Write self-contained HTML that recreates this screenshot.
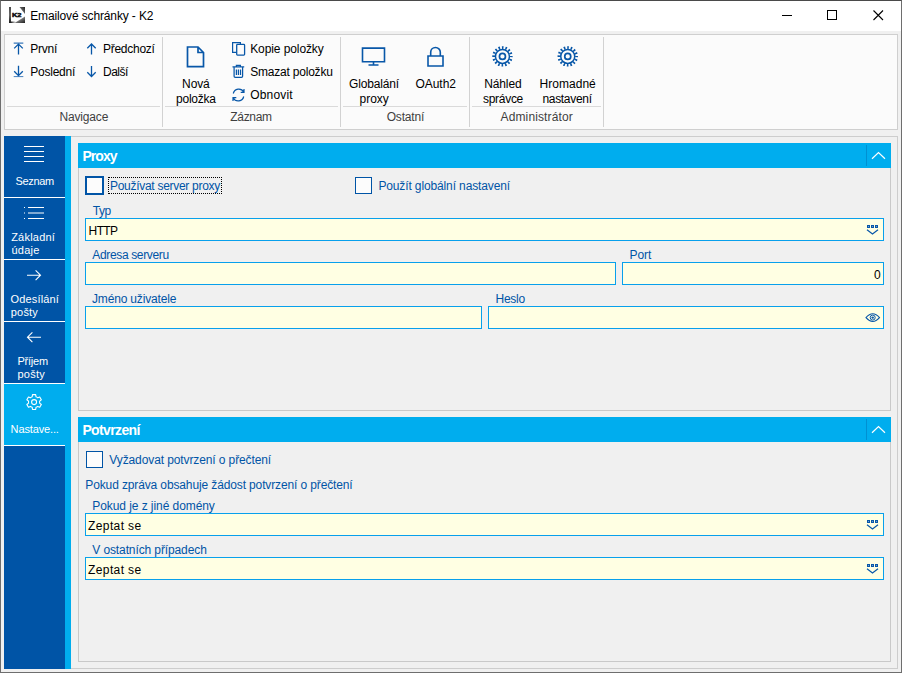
<!DOCTYPE html>
<html lang="cs">
<head>
<meta charset="utf-8">
<title>Emailové schránky - K2</title>
<style>
*{box-sizing:border-box;margin:0;padding:0}
html,body{width:902px;height:673px;overflow:hidden;background:#f0f0f0}
body{font-family:"Liberation Sans",sans-serif;font-size:12px;color:#000;position:relative}
div,svg{position:absolute}
.t{white-space:nowrap;line-height:16px;z-index:3}
#win{left:0;top:0;width:902px;height:673px;border:1px solid #6e6e6e;border-top-color:#4a4a4a;background:#f0f0f0}
#title{left:1px;top:1px;width:900px;height:30px;background:#fff}
#ribbon{left:4px;top:34px;width:894px;height:96px;background:#fbfbfb;border:1px solid #cfcfcf}
.vsep{width:1px;background:#d2d2d2;top:37px;height:90px}
.hsep{height:1px;background:#dadada;top:106px}
#side{left:4px;top:136px;width:61px;height:533px;background:#0054a6}
#strip{left:65px;top:136px;width:6px;height:533px;background:#00adee}
#sel{left:4px;top:384px;width:61px;height:61px;background:#00adee}
.sl{left:4px;width:61px;height:1px;background:#fff}
#content{left:71px;top:136px;width:827px;height:533px;border:1px solid #cdcdcd;border-left:none;background:#f0f0f0}
.ph{left:78px;width:813px;height:25px;background:#00adee}
.pb{left:78px;width:813px;border:1px solid #c9c9c9;border-top:none;background:#f0f0f0}
.phs{width:1px;height:21px;background:#0090d2;left:866px}
.inp{z-index:2;height:23px;background:#ffffe3;border:1px solid #08a0ec}
.cb{width:17px;height:17px;background:#fcfcfc;border:1px solid #0054a6}
svg{overflow:visible}
.i{stroke:#0857a8;fill:none;stroke-width:1.3}
.w{stroke:#fff;fill:none;stroke-width:1.2}
</style>
</head>
<body>
<div id="win"></div>
<div id="title"></div>
<!-- title bar icon + window controls -->
<svg style="left:9px;top:7px" width="16" height="16" viewBox="0 0 16 16">
 <defs>
  <linearGradient id="g1" x1="0.2" y1="0.2" x2="1" y2="1"><stop offset="0" stop-color="#cfcfcf"/><stop offset="0.5" stop-color="#666"/><stop offset="1" stop-color="#1c1c1c"/></linearGradient>
  <linearGradient id="g2" x1="0" y1="0" x2="0" y2="1"><stop offset="0" stop-color="#4a4a4a"/><stop offset="0.5" stop-color="#6a6a6a"/><stop offset="1" stop-color="#1a1a1a"/></linearGradient>
  <linearGradient id="g3" x1="0" y1="1" x2="1" y2="0"><stop offset="0" stop-color="#bbb"/><stop offset="0.6" stop-color="#555"/><stop offset="1" stop-color="#222"/></linearGradient>
  <linearGradient id="g4" x1="0" y1="0" x2="1" y2="0"><stop offset="0" stop-color="#222"/><stop offset="1" stop-color="#ddd"/></linearGradient>
 </defs>
 <rect x="0" y="0" width="2" height="16" fill="url(#g2)"/>
 <rect x="2" y="14.500" width="4.500" height="1.500" fill="url(#g4)"/>
 <path d="M10.500 0H16V7Z" fill="url(#g3)"/>
 <path d="M16 9.500V16H5.500Z" fill="url(#g1)"/>
 <text x="2.900" y="10.100" font-family="Liberation Sans, sans-serif" font-size="5.800" font-weight="700" fill="#0c0c0c" stroke="#0c0c0c" stroke-width="0.450" textLength="9.600" lengthAdjust="spacingAndGlyphs">K2</text>
</svg>
<svg style="left:770px;top:0" width="132" height="31" viewBox="0 0 132 31">
 <path d="M12 15.5H22" stroke="#000" stroke-width="1" fill="none"/>
 <rect x="57.5" y="10.5" width="9" height="9" stroke="#000" stroke-width="1" fill="none"/>
 <path d="M103.5 10.5L113 20M113 10.5L103.5 20" stroke="#000" stroke-width="1.1" fill="none"/>
</svg>

<!-- ribbon -->
<div id="ribbon"></div>
<div class="vsep" style="left:162px"></div>
<div class="vsep" style="left:340px"></div>
<div class="vsep" style="left:469px"></div>
<div class="vsep" style="left:603px"></div>
<div class="hsep" style="left:7px;width:153px"></div>
<div class="hsep" style="left:165px;width:173px"></div>
<div class="hsep" style="left:343px;width:124px"></div>
<div class="hsep" style="left:472px;width:129px"></div>

<!-- ribbon icons -->
<svg style="left:0;top:0" width="902" height="135" viewBox="0 0 902 135">
 <g class="i">
  <!-- Prvni -->
  <path d="M13.7 43.1H23.3" stroke-width="1"/><path d="M18.5 54.5V43.8M14.2 48.4L18.5 44.1L22.8 48.4"/>
  <!-- Posledni -->
  <path d="M13.7 76.6H23.3" stroke-width="1" stroke-opacity=".75"/><path d="M18.5 65.7V75.6M14.2 71.3L18.5 75.6L22.8 71.3"/>
  <!-- Predchozi -->
  <path d="M91.5 54.5V44M87.3 48.2L91.5 44L95.7 48.2"/>
  <!-- Dalsi -->
  <path d="M91.5 66V76.5M87.3 72.3L91.5 76.5L95.7 72.3"/>
  <!-- Nova polozka -->
  <path d="M187.500 47.000H198.000L203.500 52.500V66.600H187.500ZM198.000 47.000V52.500H203.500" stroke-width="1.7"/>
  <!-- Kopie -->
  <path d="M240.400 44.200V42.600H232.600V52.400H236.600" stroke-width="1.2"/>
  <rect x="236.700" y="44.400" width="7.900" height="10.700" rx="0.800" stroke-width="1.3"/>
  <!-- Smazat -->
  <path d="M232.500 66.800H244.200M236.400 66.600V65.400H240.400V66.600M234.100 67.000V76.200Q234.100 77.300 235.200 77.300H241.500Q242.600 77.300 242.600 76.200V67.000M236.400 69.500V75.000M238.400 69.500V75.000M240.500 69.500V75.000" stroke-width="1.250"/>
  <!-- Obnovit -->
  <path d="M233.300 93.500A5.600 5.600 0 0 1 243.700 92.000M244.000 89.000V92.300H240.700M243.700 96.500A5.600 5.600 0 0 1 233.300 98.000M233.000 101.000V97.700H236.300" stroke-width="1.2"/>
  <!-- Monitor -->
  <path d="M362.500 48.100H384.500V61.800H362.500ZM373.500 61.800V65M368.500 65H378.500" stroke-width="1.6"/>
  <!-- gears -->
  <g id="gr" stroke-width="1.5">
   <circle cx="502.450" cy="56.400" r="7.000" stroke-width="1.5"/>
   <circle cx="502.450" cy="56.400" r="3.000" stroke-width="1.7"/>
   <circle cx="502.450" cy="56.400" r="8.800" stroke-width="2.800" stroke-dasharray="1.600 1.856" stroke-dashoffset="0.800"/>
  </g>
  <use href="#gr" x="65.300"/>
  <!-- Lock -->
  <path d="M428 56H443V66H428ZM430.700 56V52.300A4.800 4.800 0 0 1 440.300 52.300V56" stroke-width="1.6"/>
 </g>
</svg>

<!-- sidebar -->
<div id="content"></div>
<div id="side"></div>
<div id="strip"></div>
<div id="sel"></div>
<div class="sl" style="top:197px"></div>
<div class="sl" style="top:259px"></div>
<div class="sl" style="top:321px"></div>
<div class="sl" style="top:383px"></div>
<div class="sl" style="top:445px"></div>
<svg style="left:0;top:136px" width="71" height="320" viewBox="0 136 71 320">
 <g class="w">
  <path d="M24 146.500H44M24 151.500H44M24 156.500H44M24 161.500H44" stroke-width="1"/>
  <path d="M28 207.500H44M28 213H44M28 218.500H44M24 207.500H25M24 213H25M24 218.500H25" stroke-width="1"/>
  <path d="M27 275.200H40.500M35.600 270.300L40.500 275.200L35.600 280.100" stroke-width="1.1"/>
  <path d="M41 337.200H27.500M32.400 332.300L27.500 337.200L32.400 342.100" stroke-width="1.1"/>
  <path d="M36.02 396.84L35.68 394.67L32.52 394.67L32.18 396.84A5.6 5.6 0 0 0 30.50 397.81L28.45 397.01L26.87 399.75L28.59 401.13A5.6 5.6 0 0 0 28.59 403.07L26.87 404.45L28.45 407.19L30.50 406.39A5.6 5.6 0 0 0 32.18 407.36L32.52 409.53L35.68 409.53L36.02 407.36A5.6 5.6 0 0 0 37.70 406.39L39.75 407.19L41.33 404.45L39.61 403.07A5.6 5.6 0 0 0 39.61 401.13L41.33 399.75L39.75 397.01L37.70 397.81A5.6 5.6 0 0 0 36.02 396.84Z" stroke-width="1.1" stroke-linejoin="round"/>
  <circle cx="34.1" cy="402.1" r="2.5" stroke-width="1.1"/>
 </g>
</svg>

<!-- panels -->
<div class="ph" style="top:143px"></div>
<div class="pb" style="top:168px;height:243px"></div>
<div class="ph" style="top:417px"></div>
<div class="pb" style="top:442px;height:220px"></div>
<div class="phs" style="top:145px"></div>
<div class="phs" style="top:419px"></div>
<svg style="left:866px;top:143px" width="25" height="300" viewBox="866 143 25 300">
 <path class="w" d="M872 158.700L878.500 152.500L885 158.700M872 432.700L878.500 426.500L885 432.700" stroke-width="1.3"/>
</svg>

<!-- checkboxes -->
<div class="cb" style="left:85px;top:176px;width:19px;height:19px;border:2px solid #0054a6"></div>
<div style="left:108px;top:177px;width:114px;height:17px;border:1px dotted #000"></div>
<div class="cb" style="left:355px;top:177px"></div>
<div class="cb" style="left:86px;top:451px"></div>

<!-- inputs -->
<div class="inp" style="left:85px;top:218px;width:799px"></div>
<div class="inp" style="left:85px;top:262px;width:531px"></div>
<div class="inp" style="left:622px;top:262px;width:262px"></div>
<div class="inp" style="left:85px;top:306px;width:397px"></div>
<div class="inp" style="left:488px;top:306px;width:396px"></div>
<div class="inp" style="left:85px;top:513px;width:799px"></div>
<div class="inp" style="left:85px;top:557px;width:799px"></div>

<!-- dropdown glyphs + eye -->
<svg style="left:860px;top:218px;z-index:3" width="24" height="365" viewBox="860 218 24 365">
 <g id="dd" fill="#0857a8">
  <rect x="867" y="225" width="3" height="3"/><rect x="871" y="225" width="3" height="3"/><rect x="875" y="225" width="3" height="3"/>
  <rect x="868" y="226" width="1" height="1" fill="#6b9fd6"/><rect x="872" y="226" width="1" height="1" fill="#6b9fd6"/><rect x="876" y="226" width="1" height="1" fill="#6b9fd6"/>
  <path d="M867 229.700L872.500 234L878 229.700" fill="none" stroke="#0857a8" stroke-width="1.2"/>
 </g>
 <use href="#dd" y="295"/>
 <use href="#dd" y="339"/>
 <g fill="none" stroke="#0857a8" stroke-width="1.1">
  <path d="M866 317.600Q872.700 309.800 879.500 317.600Q872.700 325.400 866 317.600Z"/>
  <circle cx="872.700" cy="317.600" r="2.500" stroke-width="1"/>
  <circle cx="872.700" cy="317.600" r="1.200" fill="#0857a8" stroke="none"/>
 </g>
</svg>

<div class="t" style="left:30.2px;top:8px;font-size:12px;letter-spacing:-0.134px;color:#000">Emailové schránky - K2</div>
<div class="t" style="left:30.3px;top:41px;font-size:12px;letter-spacing:-0.263px;color:#000">První</div>
<div class="t" style="left:30.3px;top:64px;font-size:12px;letter-spacing:-0.250px;color:#000">Poslední</div>
<div class="t" style="left:103.0px;top:41px;font-size:12px;letter-spacing:-0.270px;color:#000">Předchozí</div>
<div class="t" style="left:103.0px;top:64px;font-size:12px;letter-spacing:-0.509px;color:#000">Další</div>
<div class="t" style="left:59.5px;top:109px;font-size:12px;letter-spacing:-0.166px;color:#3f3f3f">Navigace</div>
<div class="t" style="left:182.1px;top:76px;font-size:12px;letter-spacing:-0.129px;color:#000">Nová</div>
<div class="t" style="left:176.0px;top:91px;font-size:12px;letter-spacing:-0.225px;color:#000">položka</div>
<div class="t" style="left:250.2px;top:41px;font-size:12px;letter-spacing:-0.094px;color:#000">Kopie položky</div>
<div class="t" style="left:250.2px;top:64px;font-size:12px;letter-spacing:-0.206px;color:#000">Smazat položku</div>
<div class="t" style="left:250.2px;top:87px;font-size:12px;letter-spacing:0.192px;color:#000">Obnovit</div>
<div class="t" style="left:230.3px;top:109px;font-size:12px;letter-spacing:-0.310px;color:#3f3f3f">Záznam</div>
<div class="t" style="left:349.0px;top:76px;font-size:12px;letter-spacing:-0.153px;color:#000">Globalání</div>
<div class="t" style="left:359.6px;top:91px;font-size:12px;letter-spacing:-0.049px;color:#000">proxy</div>
<div class="t" style="left:415.4px;top:76px;font-size:12px;letter-spacing:-0.017px;color:#000">OAuth2</div>
<div class="t" style="left:386.7px;top:109px;font-size:12px;letter-spacing:-0.170px;color:#3f3f3f">Ostatní</div>
<div class="t" style="left:484.2px;top:76px;font-size:12px;letter-spacing:-0.122px;color:#000">Náhled</div>
<div class="t" style="left:483.0px;top:91px;font-size:12px;letter-spacing:-0.290px;color:#000">správce</div>
<div class="t" style="left:539.6px;top:76px;font-size:12px;letter-spacing:0.021px;color:#000">Hromadné</div>
<div class="t" style="left:542.4px;top:91px;font-size:12px;letter-spacing:-0.305px;color:#000">nastavení</div>
<div class="t" style="left:500.6px;top:109px;font-size:12px;letter-spacing:0.116px;color:#3f3f3f">Administrátor</div>
<div class="t" style="left:15.6px;top:173px;font-size:11px;letter-spacing:-0.343px;color:#fff">Seznam</div>
<div class="t" style="left:11.2px;top:229px;font-size:11px;letter-spacing:0.212px;color:#fff">Základní</div>
<div class="t" style="left:11.5px;top:242px;font-size:11px;letter-spacing:0.216px;color:#fff">údaje</div>
<div class="t" style="left:10.6px;top:291px;font-size:11px;letter-spacing:0.156px;color:#fff">Odesílání</div>
<div class="t" style="left:10.8px;top:304px;font-size:11px;letter-spacing:0.181px;color:#fff">pošty</div>
<div class="t" style="left:17.5px;top:353px;font-size:11px;letter-spacing:-0.230px;color:#fff">Příjem</div>
<div class="t" style="left:17.5px;top:366px;font-size:11px;letter-spacing:0.241px;color:#fff">pošty</div>
<div class="t" style="left:10.6px;top:421px;font-size:11px;letter-spacing:-0.133px;color:#fff">Nastave...</div>
<div class="t" style="left:82.4px;top:148px;font-size:14px;letter-spacing:-0.944px;color:#fff;font-weight:700">Proxy</div>
<div class="t" style="left:82.4px;top:422px;font-size:14px;letter-spacing:-0.624px;color:#fff;font-weight:700">Potvrzení</div>
<div class="t" style="left:110.0px;top:178px;font-size:12px;letter-spacing:-0.288px;color:#0054a6">Používat server proxy</div>
<div class="t" style="left:378.4px;top:178px;font-size:12px;letter-spacing:-0.127px;color:#0054a6">Použít globální nastavení</div>
<div class="t" style="left:92.8px;top:203px;font-size:12px;letter-spacing:-0.515px;color:#0054a6;z-index:1">Typ</div>
<div class="t" style="left:88.6px;top:223px;font-size:12px;letter-spacing:-0.611px;color:#000">HTTP</div>
<div class="t" style="left:92.3px;top:247px;font-size:12px;letter-spacing:-0.348px;color:#0054a6;z-index:1">Adresa serveru</div>
<div class="t" style="left:629.6px;top:247px;font-size:12px;letter-spacing:-0.104px;color:#0054a6;z-index:1">Port</div>
<div class="t" style="left:874.0px;top:267px;font-size:12px;letter-spacing:0.112px;color:#000">0</div>
<div class="t" style="left:92.0px;top:291px;font-size:12px;letter-spacing:-0.168px;color:#0054a6;z-index:1">Jméno uživatele</div>
<div class="t" style="left:495.5px;top:291px;font-size:12px;letter-spacing:-0.278px;color:#0054a6;z-index:1">Heslo</div>
<div class="t" style="left:109.3px;top:452px;font-size:12px;letter-spacing:-0.106px;color:#0054a6">Vyžadovat potvrzení o přečtení</div>
<div class="t" style="left:85.3px;top:477px;font-size:12px;letter-spacing:-0.127px;color:#0054a6">Pokud zpráva obsahuje žádost potvrzení o přečtení</div>
<div class="t" style="left:92.3px;top:498px;font-size:12px;letter-spacing:-0.072px;color:#0054a6;z-index:1">Pokud je z jiné domény</div>
<div class="t" style="left:88.1px;top:518px;font-size:12px;letter-spacing:0.374px;color:#000">Zeptat se</div>
<div class="t" style="left:92.3px;top:542px;font-size:12px;letter-spacing:-0.112px;color:#0054a6;z-index:1">V ostatních případech</div>
<div class="t" style="left:88.1px;top:562px;font-size:12px;letter-spacing:0.374px;color:#000">Zeptat se</div>
</body>
</html>
